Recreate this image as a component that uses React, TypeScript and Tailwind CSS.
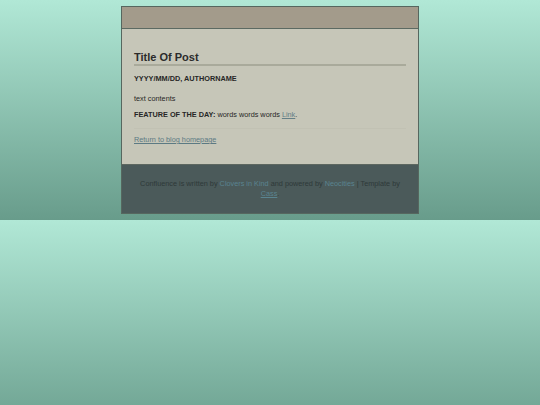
export default function App() {
  return (
    <div className="h-[405px] w-full overflow-hidden bg-[linear-gradient(to_bottom,#b1e8d6,#689c8b)] bg-[length:100%_220px] bg-repeat-y pt-[6px] font-['Liberation_Sans',Arial,sans-serif]">
      <div className="mx-auto w-[298px] border border-[#56675f]">
        <div className="h-[22px] border-b border-[#5c6a62] bg-[#a39b8b]" />
        <main className="bg-[#c6c6b8] px-[12px] pb-[19px] pt-[21px] text-[7.3px] leading-[10px] text-[#262626]">
          <h1 className="border-b-2 border-[#a9aa9b] text-[11px] font-bold leading-[14px] text-[#2b2b2b]">
            Title Of Post
          </h1>
          <p className="mt-[8px] font-bold">YYYY/MM/DD, AUTHORNAME</p>
          <p className="mt-[10px]">text contents</p>
          <p className="mt-[6px]">
            <b>FEATURE OF THE DAY:</b> words words words{" "}
            <a href="#" className="text-[#647f86] underline">
              Link
            </a>
            .
          </p>
          <hr className="mt-[8px] border-t border-[#c1c1b3]" />
          <p className="mt-[6px]">
            <a href="#" className="text-[#5c7a83] underline">
              Return to blog homepage
            </a>
          </p>
        </main>
        <footer className="border-t border-[#5d6760] bg-[#4b5a5a] px-[12px] pb-[14px] pt-[14px] text-center text-[7.3px] leading-[10px] text-[#2e3939]">
          Confluence is written by <a href="#" className="text-[#5a8490]">Clovers in Kind</a> and powered by{" "}
          <a href="#" className="text-[#5a8490]">Neocities</a> | Template by{" "}
          <a href="#" className="text-[#5a8490] underline">
            Cass
          </a>
          .
        </footer>
      </div>
    </div>
  );
}
